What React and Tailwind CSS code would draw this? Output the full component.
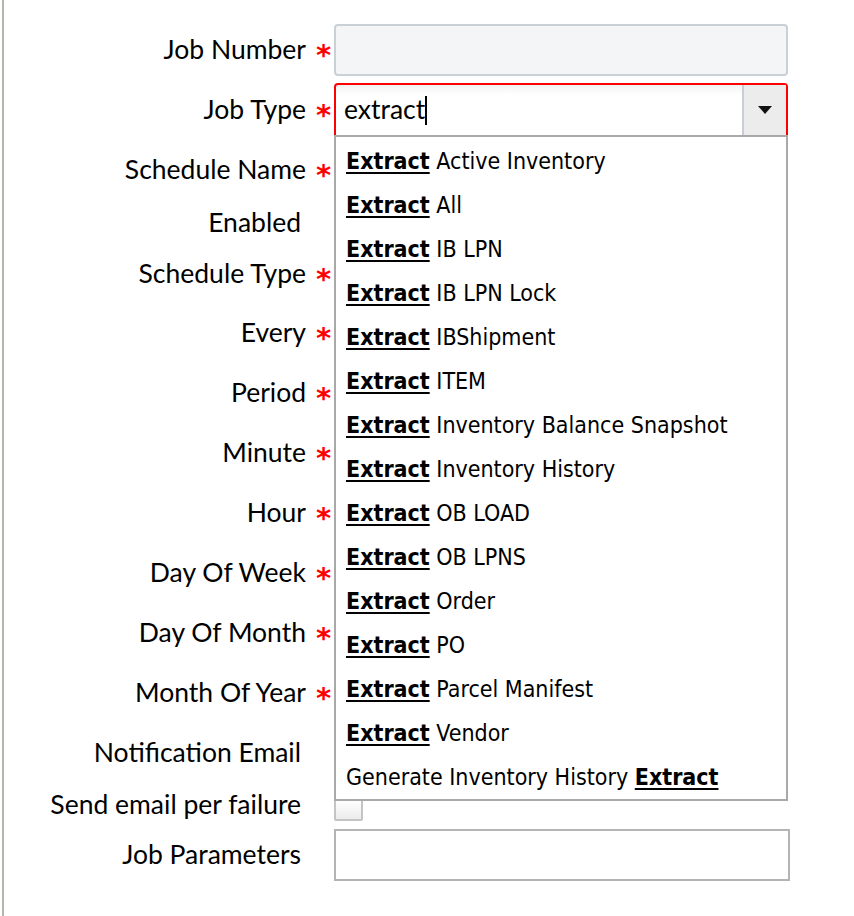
import React from 'react';

const items = [
    'Active Inventory',
    'All',
    'IB LPN',
    'IB LPN Lock',
    'IBShipment',
    'ITEM',
    'Inventory Balance Snapshot',
    'Inventory History',
    'OB LOAD',
    'OB LPNS',
    'Order',
    'PO',
    'Parcel Manifest',
    'Vendor',
];

const Row = ({ label, required, h, children }) => (
    <div className={`flex items-center ${h}`}>
        <div
            className={`w-[302px] shrink-0 text-right text-black font-['Lato',sans-serif] text-[26.5px] ${required ? '' : 'pr-[5px]'}`}
        >
            {label}
        </div>
        <div className="w-[28px] shrink-0 pl-[10px] text-[29px] font-bold leading-none text-[#f00] font-['DejaVu_Sans',sans-serif] translate-y-[5px]">
            {required ? '*' : ''}
        </div>
        <div className="w-[456px] shrink-0">{children}</div>
    </div>
);

const Dropdown = () => (
    <div className="absolute left-0 top-full z-10 w-[454px] h-[664px] border-2 border-t-0 border-[#a9a9a9] bg-white pt-[2px] font-['DejaVu_Sans_Condensed','DejaVu_Sans',sans-serif] text-[23px] text-black">
        {items.map((rest) => (
            <div key={rest} className="h-[44px] flex items-center px-[10px] whitespace-nowrap">
                <span className="font-bold underline underline-offset-[3px] decoration-2">Extract</span>
                <span>&nbsp;{rest}</span>
            </div>
        ))}
        <div className="h-[44px] flex items-center px-[10px] whitespace-nowrap">
            <span>Generate Inventory History&nbsp;</span>
            <span className="font-bold underline underline-offset-[3px] decoration-2">Extract</span>
        </div>
    </div>
);

export default function App() {
    return (
        <div className="min-h-[916px] bg-white border-l-[2px] border-[#b5b5a8] ml-[2px] pt-[20px]">
            <Row label="Job Number" required h="h-[60px]">
                <div className="w-[454px] h-[52px] rounded-[4px] border-2 border-[#c9d0d6] bg-[#f4f5f7]" />
            </Row>
            <Row label="Job Type" required h="h-[60px]">
                <div className="relative w-[454px]">
                    <div className="flex h-[52px] rounded-t-[4px] border-2 border-b-0 border-[#ff0000] bg-gradient-to-b from-[#f3f3f3] to-white to-[20%]">
                        <div className="flex-1 flex items-center pl-[8px] text-[26.5px] text-black font-['Lato',sans-serif]">
                            extract<span className="inline-block w-[2px] h-[29px] bg-black" />
                        </div>
                        <div className="w-[44px] flex items-center justify-center bg-[#ececec] border-l-2 border-[#c8ced3]">
                            <svg width="14" height="8" viewBox="0 0 14 8">
                                <path d="M0 0 H14 L7 8 Z" fill="#111" />
                            </svg>
                        </div>
                    </div>
                    <div className="h-[2px] bg-[#a9a9a9]" />
                    <Dropdown />
                </div>
            </Row>
            <Row label="Schedule Name" required h="h-[60px]" />
            <Row label="Enabled" h="h-[45px]" />
            <Row label="Schedule Type" required h="h-[58px]" />
            <Row label="Every" required h="h-[60px]" />
            <Row label="Period" required h="h-[60px]" />
            <Row label="Minute" required h="h-[60px]" />
            <Row label="Hour" required h="h-[60px]" />
            <Row label="Day Of Week" required h="h-[60px]" />
            <Row label="Day Of Month" required h="h-[60px]" />
            <Row label="Month Of Year" required h="h-[60px]" />
            <Row label="Notification Email" h="h-[60px]" />
            <Row label="Send email per failure" h="h-[44px]">
                <div className="w-[29px] h-[23px] mt-[8px] rounded-[2px] border-2 border-[#c4c4c4] bg-gradient-to-b from-white to-[#ececec]" />
            </Row>
            <Row label="Job Parameters" h="h-[56px]">
                <div className="w-[456px] h-[52px] border-2 border-[#b4b4b4] bg-white" />
            </Row>
        </div>
    );
}
